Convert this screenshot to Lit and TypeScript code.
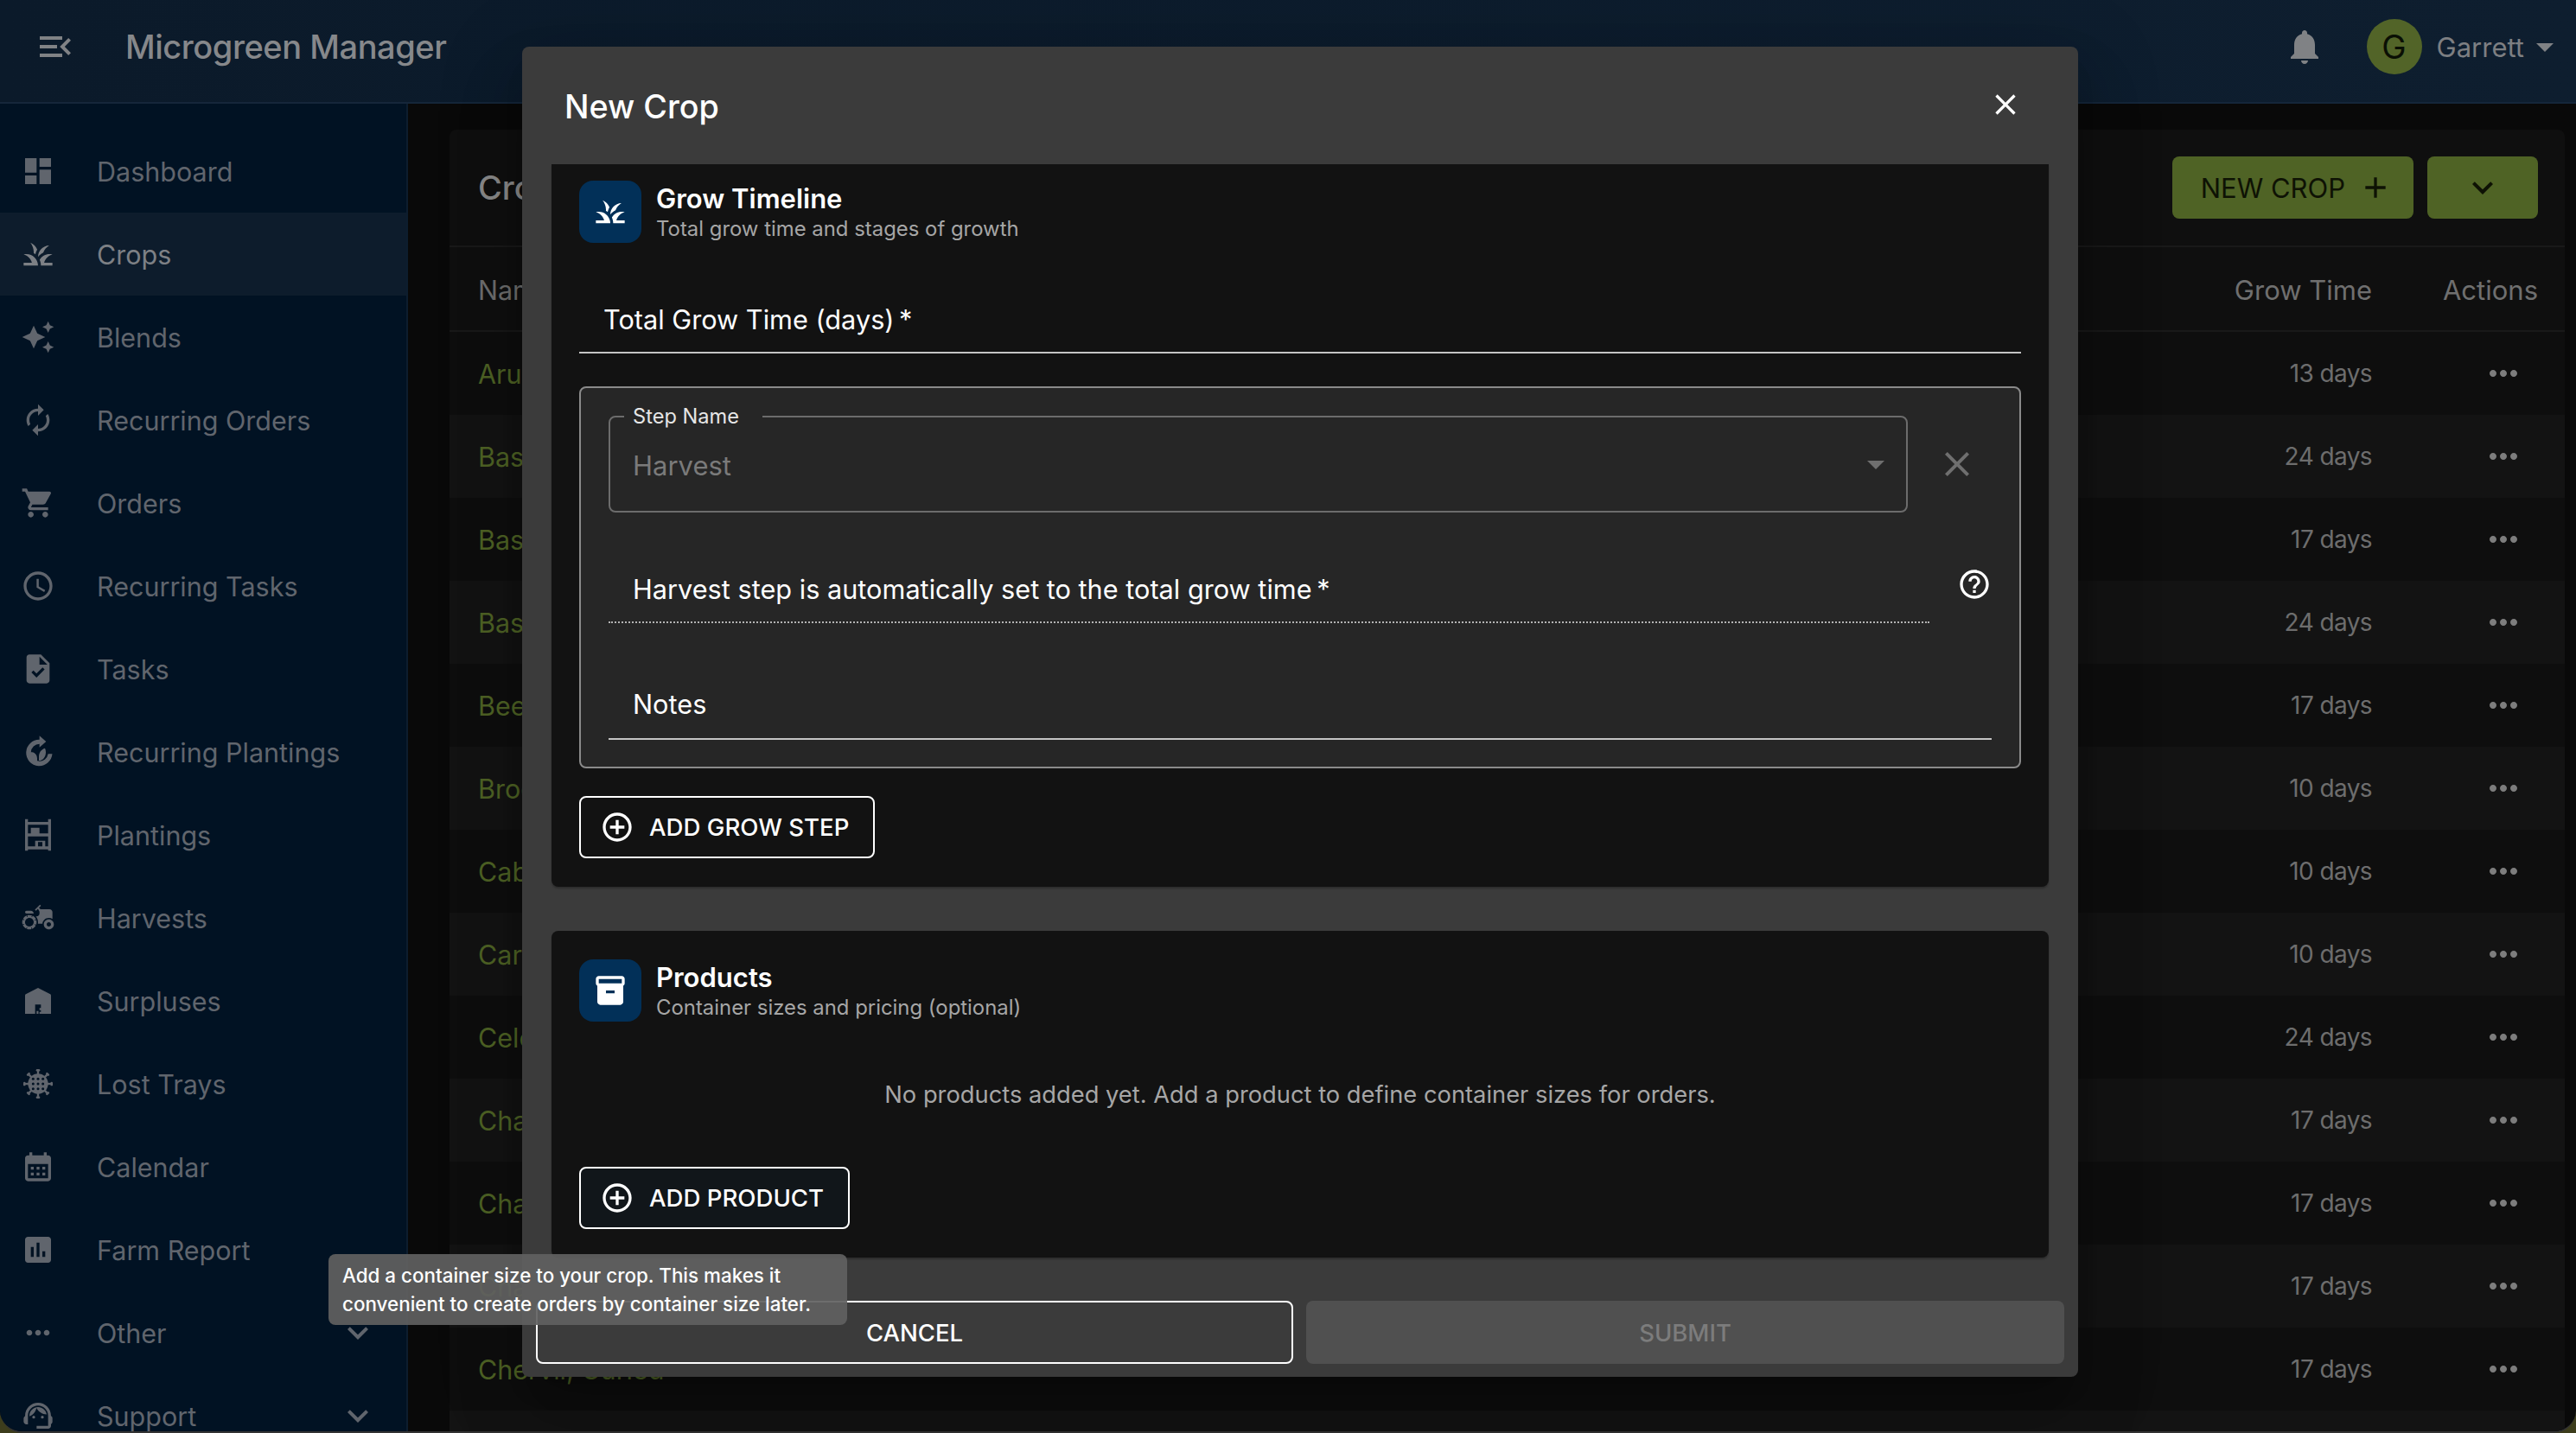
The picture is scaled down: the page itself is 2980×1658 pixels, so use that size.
import { LitElement, html, svg, css } from "lit";
import { customElement } from "lit/decorators.js";

const ic = (d: string, cls = "") => html`<svg class="ico ${cls}" viewBox="0 0 24 24"><path d=${d}></path></svg>`;

const P = {
  menuOpen: "M3 18h13v-2H3v2zm0-5h10v-2H3v2zm0-7v2h13V6H3zm18 9.59L17.42 12 21 8.41 19.59 7l-5 5 5 5L21 15.59z",
  dashboard: "M3 13h8V3H3v10zm0 8h8v-6H3v6zm10 0h8V11h-8v10zm0-18v6h8V3h-8z",
  grass: "M12,20H2v-2h5.75l0,0C7.02,15.19,4.81,12.99,2,12.26C2.64,12.1,3.31,12,4,12C8.42,12,12,15.58,12,20z M22,12.26 C21.36,12.1,20.69,12,20,12c-2.93,0-5.48,1.58-6.88,3.93c0.29,0.66,0.53,1.35,0.67,2.07c0.13,0.65,0.2,1.32,0.2,2h2h6v-2h-5.75 C16.98,15.19,19.19,12.99,22,12.26z M15.64,11.02c0.78-2.09,2.23-3.84,4.09-5C15.44,6.16,12,9.67,12,14c0,0.01,0,0.02,0,0.02 C12.95,12.75,14.2,11.72,15.64,11.02z M11.42,8.85C10.58,6.66,8.88,4.89,6.7,4C8.14,5.86,9,8.18,9,10.71c0,0.21-0.03,0.41-0.04,0.61 c0.43,0.24,0.83,0.52,1.22,0.82C10.39,10.96,10.83,9.85,11.42,8.85z",
  sparkle: "M19 9l1.25-2.75L23 5l-2.75-1.25L19 1l-1.25 2.75L15 5l2.75 1.25L19 9zm-7.5.5L9 4 6.5 9.5 1 12l5.5 2.5L9 20l2.5-5.5L17 12l-5.5-2.5zM19 15l-1.25 2.75L15 19l2.75 1.25L19 23l1.25-2.75L23 19l-2.75-1.25L19 15z",
  renew: "M12 6v3l4-4-4-4v3c-4.42 0-8 3.58-8 8 0 1.57.46 3.03 1.24 4.26L6.7 14.8c-.45-.83-.7-1.79-.7-2.8 0-3.31 2.69-6 6-6zm6.76 1.74L17.3 9.2c.44.84.7 1.79.7 2.8 0 3.31-2.69 6-6 6v-3l-4 4 4 4v-3c4.42 0 8-3.58 8-8 0-1.57-.46-3.03-1.24-4.26z",
  cart: "M7 18c-1.1 0-1.99.9-1.99 2S5.9 22 7 22s2-.9 2-2-.9-2-2-2zM1 2v2h2l3.6 7.59-1.35 2.45c-.16.28-.25.61-.25.96 0 1.1.9 2 2 2h12v-2H7.42c-.14 0-.25-.11-.25-.25l.03-.12.9-1.63h7.45c.75 0 1.41-.41 1.75-1.03l3.58-6.49c.08-.14.12-.31.12-.48 0-.55-.45-1-1-1H5.21l-.94-2H1zm16 16c-1.1 0-1.99.9-1.99 2s.89 2 1.99 2 2-.9 2-2-.9-2-2-2z",
  clock: "M11.99 2C6.47 2 2 6.48 2 12s4.47 10 9.99 10C17.52 22 22 17.52 22 12S17.52 2 11.99 2zM12 20c-4.42 0-8-3.58-8-8s3.58-8 8-8 8 3.58 8 8-3.58 8-8 8zm.5-13H11v6l5.25 3.15.75-1.23-4.5-2.67z",
  task: "M14 2H6c-1.1 0-1.99.9-1.99 2L4 20c0 1.1.89 2 1.99 2H18c1.1 0 2-.9 2-2V8l-6-6zm-3.06 16L7.4 14.46l1.41-1.41 2.12 2.12 4.24-4.24 1.41 1.41L10.94 18zM13 9V3.5L18.5 9H13z",
  replant: "M13 .8l4.6 4-4.6 4V6.4a6 6 0 1 0 6 7h2.9A9.1 9.1 0 1 1 13 3.5zM11.4 19c-3 0-5-2-5-5 0-.8.1-1.4.3-2 3 0 4.7 2 4.7 4.5zM12.6 18v-2.5c0-3 1.6-5.2 4.2-6 .4.8.6 1.7.6 2.6 0 3.4-2 5.9-4.8 5.9z",
  rack: "M3 1h2v2h14V1h2v22h-2v-1H5v1H3V1zm2 4v6h2V7h6v4h6V5H5zm0 8v7h5v-4h7v4h2v-7H5zm7 4v3h3v-3h-3z",
  tractor: "M19.5 12c.93 0 1.78.28 2.5.76V8c0-1.1-.9-2-2-2h-6.29l-1.06-1.06 1.41-1.41-.71-.71-3.53 3.53.71.71 1.41-1.41L13 7.71V9c0 1.1-.9 2-2 2h-.54c.95 1.06 1.54 2.46 1.54 4 0 .34-.04.67-.09 1h3.14c.25-2.25 2.14-4 4.45-4z M19.5 13c-1.93 0-3.5 1.57-3.5 3.5s1.57 3.5 3.5 3.5 3.5-1.57 3.5-3.5-1.57-3.5-3.5-3.5zm0 5c-.83 0-1.5-.67-1.5-1.5s.67-1.5 1.5-1.5 1.5.67 1.5 1.5-.67 1.5-1.5 1.5z M4 9h5c0-1.1-.9-2-2-2H4c-.55 0-1 .45-1 1s.45 1 1 1z M9.83 13.82l-.18-.47L10.58 13c-.46-1.06-1.28-1.91-2.31-2.43l-.4.89-.46-.21.4-.9C7.26 10.13 6.64 10 6 10c-.53 0-1.04.11-1.52.26l.34.91-.47.18L4 10.42c-1.06.46-1.91 1.28-2.43 2.31l.89.4-.21.46-.9-.4C1.13 13.74 1 14.36 1 15c0 .53.11 1.04.26 1.52l.91-.34.18.47-.93.35c.46 1.06 1.28 1.91 2.31 2.43l.4-.89.46.21-.4.9c.55.22 1.17.35 1.81.35.53 0 1.04-.11 1.52-.26l-.34-.91.47-.18.35.93c1.06-.46 1.91-1.28 2.43-2.31l-.89-.4.21-.46.9.4c.22-.57.35-1.19.35-1.83 0-.53-.11-1.04-.26-1.52l-.91.34zm-2.68 3.95c-1.53.63-3.29-.09-3.92-1.62-.63-1.53.09-3.29 1.62-3.92 1.53-.63 3.29.09 3.92 1.62.64 1.53-.09 3.29-1.62 3.92z",
  barn: "M3 21V8.2c0-.3.2-.6.5-.8L12 3l8.5 4.4c.3.2.5.5.5.8V21h-7v-6.5h-4V21H3zm8-2h1.3v2H11zm2-2h1v1.5h-1zm0 2.6h1V21h-1z",
  calendar: "M19 4h-1V2h-2v2H8V2H6v2H5c-1.11 0-1.99.9-1.99 2L3 20c0 1.1.89 2 2 2h14c1.1 0 2-.9 2-2V6c0-1.1-.9-2-2-2zm0 16H5V10h14v10zM9 14H7v-2h2v2zm4 0h-2v-2h2v2zm4 0h-2v-2h2v2zm-8 4H7v-2h2v2zm4 0h-2v-2h2v2zm4 0h-2v-2h2v2z",
  report: "M19 3H5c-1.1 0-2 .9-2 2v14c0 1.1.9 2 2 2h14c1.1 0 2-.9 2-2V5c0-1.1-.9-2-2-2zM9 17H7v-7h2v7zm4 0h-2V7h2v10zm4 0h-2v-4h2v4z",
  more: "M6 10c-1.1 0-2 .9-2 2s.9 2 2 2 2-.9 2-2-.9-2-2-2zm12 0c-1.1 0-2 .9-2 2s.9 2 2 2 2-.9 2-2-.9-2-2-2zm-6 0c-1.1 0-2 .9-2 2s.9 2 2 2 2-.9 2-2-.9-2-2-2z",
  support: "M21 12.22C21 6.73 16.74 3 12 3c-4.69 0-9 3.65-9 9.28-.6.34-1 .98-1 1.72v2c0 1.1.9 2 2 2h1v-6.1c0-3.87 3.13-7 7-7s7 3.13 7 7V19h-8v2h8c1.1 0 2-.9 2-2v-1.22c.59-.31 1-.92 1-1.64v-2.3c0-.7-.41-1.31-1-1.62zM9 12a1 1 0 1 0 0 2 1 1 0 0 0 0-2zm6 0a1 1 0 1 0 0 2 1 1 0 0 0 0-2zM18 11.03C17.52 8.18 15.04 6 12.05 6c-3.03 0-6.29 2.51-6.03 6.45 2.47-1.01 4.33-3.21 4.86-5.89 1.31 2.63 4 4.44 7.12 4.47z",
  chevron: "M7.41 8.59L12 13.17l4.59-4.58L18 10l-6 6-6-6 1.41-1.41z",
  bell: "M12 22c1.1 0 2-.9 2-2h-4c0 1.1.89 2 2 2zm6-6v-5c0-3.07-1.64-5.64-4.5-6.32V4c0-.83-.67-1.5-1.5-1.5s-1.5.67-1.5 1.5v.68C7.63 5.36 6 7.92 6 11v5l-2 2v1h16v-1l-2-2z",
  drop: "M7 10l5 5 5-5z",
  close: "M19 6.41L17.59 5 12 10.59 6.41 5 5 6.41 10.59 12 5 17.59 6.41 19 12 13.41 17.59 19 19 17.59 13.41 12z",
  plus: "M19 13h-6v6h-2v-6H5v-2h6V5h2v6h6v2z",
  addCircle: "M13 7h-2v4H7v2h4v4h2v-4h4v-2h-4V7zm-1-5C6.48 2 2 6.48 2 12s4.48 10 10 10 10-4.48 10-10S17.52 2 12 2zm0 18c-4.41 0-8-3.59-8-8s3.59-8 8-8 8 3.59 8 8-3.59 8-8 8z",
  help: "M11 18h2v-2h-2v2zm1-16C6.48 2 2 6.48 2 12s4.48 10 10 10 10-4.48 10-10S17.52 2 12 2zm0 18c-4.41 0-8-3.59-8-8s3.59-8 8-8 8 3.59 8 8-3.59 8-8 8zm0-14c-2.21 0-4 1.79-4 4h2c0-1.1.9-2 2-2s2 .9 2 2c0 2-3 1.75-3 5h2c0-2.25 3-2.5 3-5 0-2.21-1.79-4-4-4z",
  box: "M20 2H4c-1 0-2 .9-2 2v3.01c0 .72.43 1.34 1 1.69V20c0 1.1 1.1 2 2 2h14c.9 0 2-.9 2-2V8.7c.57-.35 1-.97 1-1.69V4c0-1.1-1-2-2-2zm-5 12H9v-2h6v2zm5-7H4V4l16-.02V7z",
};

// spiky wheel for lost trays, spokes and holes are just repeated shapes
const wheel = () => {
  const spokes = [0, 45, 90, 135, 180, 225, 270, 315];
  const holes: [number, number][] = [];
  for (const y of [8.6, 12, 15.4]) for (const x of [8.6, 12, 15.4]) holes.push([x, y]);
  return html`<svg class="ico" viewBox="0 0 24 24">
    ${spokes.map(
      (a) => svg`<g transform="rotate(${a} 12 12)"><rect x="11.3" y="3" width="1.4" height="3"></rect><rect x="10.6" y="1.8" width="2.8" height="1.5" rx="0.7"></rect></g>`
    )}
    <path d="M12 5a7 7 0 1 0 0 14 7 7 0 0 0 0-14z"></path>
    ${holes.map(([x, y]) => svg`<circle cx=${x} cy=${y} r="0.9" class="hole"></circle>`)}
  </svg>`;
};

const nav: { label: string; icon: any; arrow?: boolean; active?: boolean }[] = [
  { label: "Dashboard", icon: ic(P.dashboard) },
  { label: "Crops", icon: ic(P.grass), active: true },
  { label: "Blends", icon: ic(P.sparkle) },
  { label: "Recurring Orders", icon: ic(P.renew) },
  { label: "Orders", icon: ic(P.cart) },
  { label: "Recurring Tasks", icon: ic(P.clock) },
  { label: "Tasks", icon: ic(P.task) },
  { label: "Recurring Plantings", icon: ic(P.replant) },
  { label: "Plantings", icon: ic(P.rack) },
  { label: "Harvests", icon: ic(P.tractor) },
  { label: "Surpluses", icon: ic(P.barn) },
  { label: "Lost Trays", icon: wheel() },
  { label: "Calendar", icon: ic(P.calendar) },
  { label: "Farm Report", icon: ic(P.report) },
  { label: "Other", icon: ic(P.more), arrow: true },
  { label: "Support", icon: ic(P.support), arrow: true },
];

const crops: [string, number][] = [
  ["Arugula", 13], ["Basil", 24], ["Basil", 17], ["Basil", 24], ["Beet", 17],
  ["Broccoli", 10], ["Cabbage", 10], ["Carrot", 10], ["Celery", 24], ["Chard", 17],
  ["Chard", 17], ["Chard", 17], ["Chervil, Curled", 17],
];

@customElement("app-root")
export class AppRoot extends LitElement {
  static styles = css`
    :host {
      display: block;
      position: relative;
      width: 2980px;
      height: 1658px;
      overflow: hidden;
      background: #3d3d1c;
      font-family: Inter, "Noto Sans", sans-serif;
    }
    .ico { width: 40px; height: 40px; fill: currentColor; flex: none; display: block; }
    .ico.big { width: 48px; height: 48px; }
    .hole { fill: #011223; }

    .shell {
      height: 1658px;
      box-sizing: border-box;
      border-bottom: 2px solid #333;
      border-radius: 0 0 26px 26px;
      overflow: hidden;
      display: flex;
      flex-direction: column;
      background: #090909;
    }
    .topbar {
      flex: none;
      height: 120px;
      box-sizing: border-box;
      padding: 0 12px 10px 40px;
      border-bottom: 2px solid #15263a;
      background: linear-gradient(90deg, #0b1a2a, #0e1e2f);
      display: flex;
      align-items: center;
      color: #808285;
    }
    .app-name { margin-left: 57px; font-size: 38px; letter-spacing: -0.45px; font-weight: 500; flex: 1; color: #86888b; }
    .avatar {
      width: 64px;
      height: 64px;
      border-radius: 50%;
      background: #526428;
      color: #0a0f04;
      font-size: 38px;
      display: flex;
      align-items: center;
      justify-content: center;
      margin-left: 48px;
    }
    .user { margin-left: 17px; font-size: 31px; color: #7d7f82; }

    .below { flex: 1; display: flex; min-height: 0; }
    .side {
      flex: none;
      width: 472px;
      box-sizing: border-box;
      padding-top: 30px;
      background: #011223;
      border-right: 2px solid #0d1d2e;
      color: #60656d;
      overflow: hidden;
    }
    .nav-item {
      height: 96px;
      display: flex;
      align-items: center;
      padding: 0 32px 0 24px;
      font-size: 30.5px;
    }
    .nav-item.active { background: #0d1c2c; color: #7d8085; }
    .nav-item .ico:first-child { margin-right: 48px; }
    .nav-item span { flex: 1; }

    .content { flex: 1; padding: 30px 13px 0 48px; min-width: 0; }
    .card {
      height: 100%;
      background: #0f0f0f;
      border-radius: 8px 8px 0 0;
      overflow: hidden;
    }
    .card-head {
      height: 136px;
      box-sizing: border-box;
      border-bottom: 2px solid #191919;
      display: flex;
      align-items: center;
      padding: 0 31px 0 33px;
    }
    .card-title { flex: 1; font-size: 38px; font-weight: 500; color: #8a8a8a; }
    .green-btn {
      height: 72px;
      box-sizing: border-box;
      background: #4f6325;
      color: #0e1204;
      border-radius: 8px;
      display: flex;
      align-items: center;
      font-size: 31px;
    }
    .new-crop { padding: 0 24px 0 33px; gap: 15px; }
    .menu-btn { width: 128px; justify-content: center; margin-left: 16px; }

    .row {
      height: 96px;
      box-sizing: border-box;
      display: flex;
      align-items: center;
      padding: 0 31px 0 33px;
      font-size: 28px;
      letter-spacing: -0.6px;
      color: #6d6d6d;
      background: #0e0e0e;
    }
    .row.even { background: #131313; }
    .row.th {
      height: 98px;
      padding-top: 3px;
      background: #0f0f0f;
      border-bottom: 2px solid #191919;
      font-size: 31px;
      letter-spacing: 0;
      color: #6f6f6f;
    }
    .row .name { flex: 1; color: #4f6325; font-size: 30.5px; letter-spacing: 0; }
    .row.th .name { color: #6f6f6f; }
    .row .actions { width: 192px; display: flex; justify-content: flex-end; }
    .row .dots { margin-right: 16px; color: #7d7d7d; }

    .modal {
      position: absolute;
      left: 604px;
      top: 54px;
      width: 1800px;
      height: 1539px;
      background: #3b3b3b;
      border-radius: 8px;
      box-shadow: 0 22px 30px -14px rgba(0, 0, 0, 0.2), 0 48px 76px 6px rgba(0, 0, 0, 0.14), 0 18px 92px 16px rgba(0, 0, 0, 0.12);
      display: flex;
      flex-direction: column;
    }
    .modal-head {
      flex: none;
      height: 136px;
      box-sizing: border-box;
      padding: 2px 64px 0 49px;
      display: flex;
      align-items: center;
      justify-content: space-between;
      color: #fff;
      font-size: 37.7px;
      font-weight: 500;
    }
    .modal-head .ico { margin-top: -4px; }
    .modal-body {
      flex: none;
      height: 1266px;
      margin: 0 34px;
      display: flex;
      flex-direction: column;
      gap: 51px;
    }
    .panel {
      background: #121212;
      box-sizing: border-box;
      padding: 33px 32px;
      border-radius: 8px;
      box-shadow: 0 2px 2px rgba(0, 0, 0, 0.25);
      color: #fff;
    }
    .panel.cut { padding-top: 19px; border-radius: 0 0 8px 8px; }
    .panel-head { display: flex; align-items: flex-start; gap: 17px; }
    .tile {
      width: 72px;
      height: 72px;
      border-radius: 16px;
      background: #023058;
      color: #fff;
      display: flex;
      align-items: center;
      justify-content: center;
    }
    .panel-title { font-size: 31px; font-weight: 600; line-height: 42px; }
    .panel-sub { font-size: 23.9px; line-height: 28px; color: #a6a6a6; }
    .panel-text { height: 72px; }

    .field {
      font-size: 30.7px;
      line-height: 44px;
      padding: 0 0 15px 28px;
      border-bottom: 2px solid #c4c4c4;
    }
    .grow-time { margin-top: 67px; }
    .step {
      margin-top: 38px;
      box-sizing: border-box;
      height: 442px;
      background: #262626;
      border: 2px solid #8a8a8a;
      border-radius: 8px;
      padding: 32px 32px 0;
    }
    .step-row { display: flex; align-items: center; }
    .select {
      position: relative;
      width: 1503px;
      height: 112px;
      box-sizing: border-box;
      border: 2px solid #6c6c6c;
      border-radius: 8px;
      padding: 0 11px 0 26px;
      display: flex;
      align-items: center;
      justify-content: space-between;
      font-size: 31px;
      color: #7a7a7a;
    }
    .select span { padding-top: 3px; }
    .select label {
      position: absolute;
      left: 16px;
      top: -16px;
      padding: 0 27px 0 10px;
      line-height: 30px;
      font-size: 23.6px;
      color: #e6e6e6;
      background: #262626;
    }
    .select .ico { color: #6f6f6f; }
    .step-close { margin-left: 33px; color: #6f6f6f; }
    .auto-row { margin-top: 63px; display: flex; align-items: flex-start; }
    .auto-field {
      flex: none;
      width: 1528px;
      box-sizing: border-box;
      padding-top: 4px;
      border-bottom: 2px dotted #b4b4b4;
    }
    .auto-row .ico { margin-left: 32px; color: #fff; }
    .notes { margin-top: 72px; padding-bottom: 17px; }

    .line-btn {
      display: inline-flex;
      align-items: center;
      gap: 17px;
      box-sizing: border-box;
      height: 72px;
      padding: 0 28px 0 22px;
      margin-top: 32px;
      border: 2px solid #fff;
      border-radius: 8px;
      color: #fff;
      font-size: 27.6px;
      font-weight: 500;
    }
    .line-btn.tinted { background: #11161a; margin-top: 63px; }
    .empty {
      margin-top: 65px;
      line-height: 40px;
      font-size: 27.3px;
      text-align: center;
      color: #a6a6a6;
    }

    .modal-foot {
      flex: none;
      margin-top: 49px;
      padding: 0 16px;
      display: flex;
      gap: 15px;
    }
    .foot-btn {
      flex: none;
      height: 73px;
      box-sizing: border-box;
      border-radius: 8px;
      display: flex;
      align-items: center;
      justify-content: center;
      font-size: 27.5px;
      font-weight: 500;
    }
    .cancel { width: 876px; border: 2px solid #fff; color: #fff; }
    .submit { width: 877px; background: #505050; color: #7c7c7c; }

    .tip {
      position: absolute;
      left: 380px;
      top: 1451px;
      width: 600px;
      height: 82px;
      box-sizing: border-box;
      padding: 8px 16px;
      background: rgba(97, 97, 97, 0.92);
      border-radius: 8px;
      font-size: 22.4px;
      line-height: 33px;
      font-weight: 500;
      color: #fff;
    }
  `;

  render() {
    return html`
      <div class="shell">
        <header class="topbar">
          ${ic(P.menuOpen, "big")}
          <div class="app-name">Microgreen Manager</div>
          ${ic(P.bell, "big")}
          <div class="avatar">G</div>
          <div class="user">Garrett</div>
          ${ic(P.drop, "big")}
        </header>
        <div class="below">
          <nav class="side">
            ${nav.map(
              (n) => html`<div class="nav-item ${n.active ? "active" : ""}">
                ${n.icon}<span>${n.label}</span>${n.arrow ? ic(P.chevron, "big") : ""}
              </div>`
            )}
          </nav>
          <main class="content">
            <section class="card">
              <div class="card-head">
                <div class="card-title">Crops</div>
                <div class="green-btn new-crop">NEW CROP ${ic(P.plus)}</div>
                <div class="green-btn menu-btn">${ic(P.chevron, "big")}</div>
              </div>
              <div class="row th">
                <div class="name">Name</div>
                <div>Grow Time</div>
                <div class="actions">Actions</div>
              </div>
              ${crops.map(
                ([name, days], i) => html`<div class="row ${i % 2 ? "even" : ""}">
                  <div class="name">${name}</div>
                  <div>${days} days</div>
                  <div class="actions"><span class="dots">${ic(P.more, "big")}</span></div>
                </div>`
              )}
              <div class="row even"></div>
            </section>
          </main>
        </div>
      </div>

      <div class="modal">
        <div class="modal-head">New Crop ${ic(P.close)}</div>
        <div class="modal-body">
          <section class="panel cut">
            <div class="panel-head">
              <div class="tile">${ic(P.grass)}</div>
              <div class="panel-text">
                <div class="panel-title">Grow Timeline</div>
                <div class="panel-sub">Total grow time and stages of growth</div>
              </div>
            </div>
            <div class="field grow-time">Total Grow Time (days)&#8201;*</div>
            <div class="step">
              <div class="step-row">
                <div class="select">
                  <label>Step Name</label>
                  <span>Harvest</span>
                  ${ic(P.drop, "big")}
                </div>
                <div class="step-close">${ic(P.close, "big")}</div>
              </div>
              <div class="auto-row">
                <div class="field auto-field">Harvest step is automatically set to the total grow time&#8201;*</div>
                ${ic(P.help)}
              </div>
              <div class="field notes">Notes</div>
            </div>
            <div class="line-btn">${ic(P.addCircle)} ADD GROW STEP</div>
          </section>
          <section class="panel">
            <div class="panel-head">
              <div class="tile">${ic(P.box)}</div>
              <div class="panel-text">
                <div class="panel-title">Products</div>
                <div class="panel-sub">Container sizes and pricing (optional)</div>
              </div>
            </div>
            <div class="empty">No products added yet. Add a product to define container sizes for orders.</div>
            <div class="line-btn tinted">${ic(P.addCircle)} ADD PRODUCT</div>
          </section>
        </div>
        <div class="modal-foot">
          <div class="foot-btn cancel">CANCEL</div>
          <div class="foot-btn submit">SUBMIT</div>
        </div>
      </div>

      <div class="tip">Add a container size to your crop. This makes it convenient to create orders by container size later.</div>
    `;
  }
}
